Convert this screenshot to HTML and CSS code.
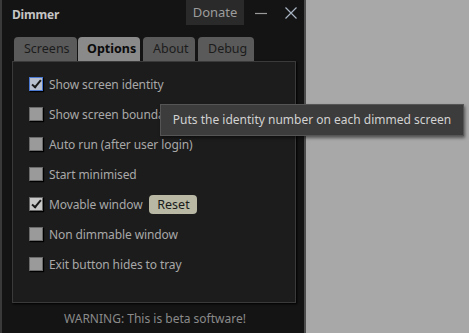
FILE: index.html
```html
<!DOCTYPE html>
<html lang="en">
<head>
    <meta charset="UTF-8">
    <meta name="viewport" content="width=device-width, initial-scale=1.0">
    <title>Dimmer</title>
    <link rel="stylesheet" href="styles.css">
</head>
<body>

    <div id="dimmer-window">
        <div class="title-bar">
            <span class="title">Dimmer</span>
            <span class="donate-btn">Donate</span>
            <span class="win-btn">
                <svg width="14" height="14" viewBox="0 0 14 14"><path d="M1 7.5H13" stroke="#9a9a9a" stroke-width="1.2"/></svg>
            </span>
            <span class="win-btn">
                <svg width="14" height="14" viewBox="0 0 14 14"><path d="M1.5 1.5L12.5 12.5M12.5 1.5L1.5 12.5" stroke="#a8b4c4" stroke-width="1.2"/></svg>
            </span>
        </div>

        <div class="tabs">
            <span class="tab">Screens</span>
            <span class="tab active">Options</span>
            <span class="tab">About</span>
            <span class="tab">Debug</span>
        </div>

        <div class="panel">
            <ul class="options-list">
                <li class="option-item"><span class="check checked focus"></span>Show screen identity</li>
                <li class="option-item"><span class="check"></span>Show screen boundaries</li>
                <li class="option-item"><span class="check"></span>Auto run (after user login)</li>
                <li class="option-item"><span class="check"></span>Start minimised</li>
                <li class="option-item"><span class="check checked"></span>Movable window <span class="reset-btn">Reset</span></li>
                <li class="option-item"><span class="check"></span>Non dimmable window</li>
                <li class="option-item"><span class="check"></span>Exit button hides to tray</li>
            </ul>
        </div>

        <div class="warning">WARNING: This is beta software!</div>

        <div class="tooltip">Puts the identity number on each dimmed screen</div>
    </div>

</body>
</html>
```

FILE: styles.css
```css
body {
    margin: 0;
    background: #a8a8a8;
    font-family: "Noto Sans", Arial, sans-serif;
    font-size: 12px;
    width: 469px;
    height: 333px;
    overflow: hidden;
}

#dimmer-window {
    position: relative;
    width: 302px;
    height: 333px;
    background: #141414;
    border-left: 2px solid #3a3a3a;
    border-right: 2px solid #4c4c4c;
}

.title-bar {
    display: flex;
    align-items: center;
    height: 25px;
}

.title {
    flex: 1;
    padding-left: 10px;
    padding-top: 3px;
    color: #c4c4c4;
    font-weight: bold;
    font-size: 12px;
    letter-spacing: -0.2px;
}

.donate-btn {
    width: 58px;
    height: 25px;
    line-height: 24px;
    text-align: center;
    background: #2a2a2a;
    color: #9c9c9c;
    font-size: 13px;
}

.win-btn {
    display: flex;
    width: 26px;
    justify-content: center;
    padding-left: 4px;
}

.tabs {
    display: flex;
    gap: 2px;
    margin-top: 12px;
    padding-left: 12px;
    height: 24px;
}

.tab {
    height: 24px;
    line-height: 24px;
    padding: 0 10px;
    text-align: center;
    background: #5a5a5a;
    color: #1c1c1c;
    border-radius: 4px 4px 0 0;
    font-size: 12.5px;
}

.tab:nth-child(1) {
    width: 43px;
}

.tab.active {
    width: 44px;
    margin-left: -1px;
    padding: 0 9px;
    background: #8a8a8a;
    color: #0a0a0a;
    font-weight: bold;
}

.tab:nth-child(3) {
    width: 32px;
    margin-left: 1px;
}

.tab:nth-child(4) {
    width: 36px;
    margin-left: 1px;
}

.panel {
    margin-left: 10px;
    width: 282px;
    height: 240px;
    background: #1c1c1c;
    border: 1px solid #3a3a3a;
    box-shadow: 1px 1px 2px #000;
}

.options-list {
    list-style-type: none;
    margin: 0;
    padding: 7px 0 0 16px;
}

.option-item {
    display: flex;
    align-items: center;
    height: 30px;
    color: #a8a8a8;
    font-size: 12px;
    letter-spacing: -0.1px;
}

.check {
    width: 12px;
    height: 12px;
    margin-right: 6px;
    background: #9a9a9a;
    border: 1px solid #6a6a6a;
    box-shadow: 1px 1px 1px #000;
    position: relative;
}

.check.checked {
    background: #c8c8c8;
}

.check.checked::after {
    content: "";
    position: absolute;
    left: 4px;
    top: 0px;
    width: 3px;
    height: 8px;
    border: solid #1a1a1a;
    border-width: 0 2px 2px 0;
    transform: rotate(40deg);
}

.check.focus {
    border-color: #4a78d0;
    background: #b8c0d0;
}

.reset-btn {
    margin-left: 7px;
    width: 48px;
    height: 19px;
    line-height: 19px;
    text-align: center;
    background: #b8b8a4;
    color: #1a1a1a;
    border-radius: 4px;
    font-size: 12.5px;
    letter-spacing: 0;
}

.warning {
    text-align: center;
    color: #8a8a8a;
    font-size: 12px;
    margin-top: 7px;
    padding-left: 4px;
}

.tooltip {
    position: absolute;
    left: 158px;
    top: 104px;
    width: 302px;
    height: 30px;
    line-height: 30px;
    text-align: center;
    white-space: nowrap;
    background: #3c3c3c;
    border: 1px solid #555;
    color: #d2d2d2;
    font-size: 12px;
    box-shadow: 1px 2px 3px rgba(0, 0, 0, 0.5);
}
```
